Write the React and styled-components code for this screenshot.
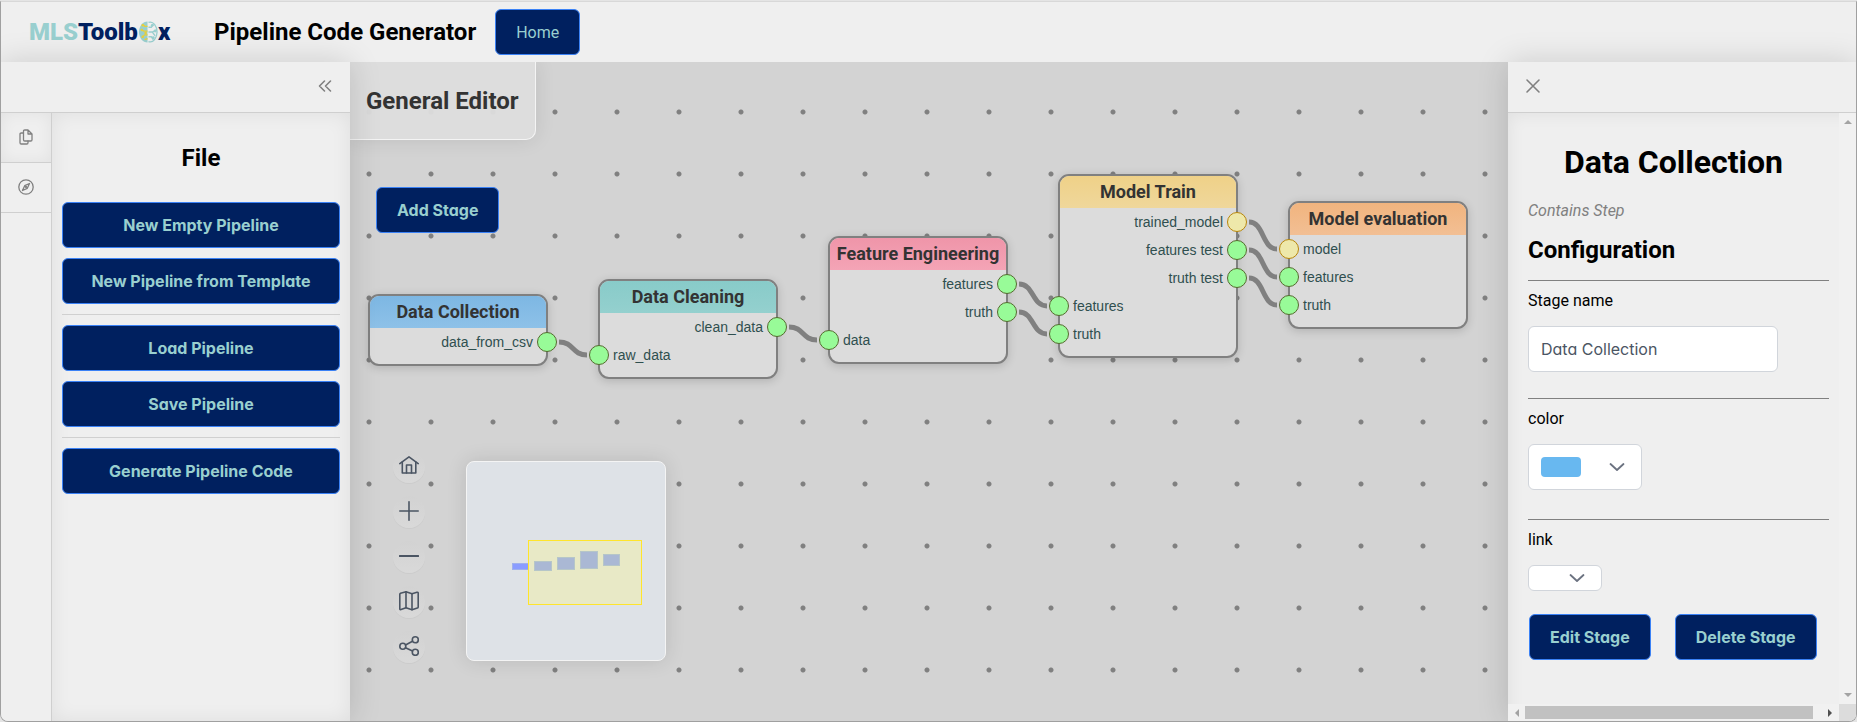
import React from "react";
import styled, { createGlobalStyle, css } from "styled-components";

const GlobalStyle = createGlobalStyle`
  *, *::before, *::after { box-sizing: border-box; }
  body { margin: 0; background: #e4e4e4; font-family: Roboto, "Liberation Sans", sans-serif; color: #000; }
  h1, h2, h3, p { margin: 0; }
  button, input, select { font: inherit; }
`;

const Screen = styled.div`
  display: flex;
  flex-direction: column;
  height: 100vh;
  min-height: 640px;
  padding-top: 1px;
`;

const Window = styled.div`
  flex: 1;
  min-height: 0;
  display: flex;
  flex-direction: column;
  overflow: hidden;
  background: #efefef;
  border: 1px solid #a0a0a0;
  border-top-color: #d8d8d8;
  border-radius: 0 0 8px 8px;
`;

const Header = styled.header`
  display: flex;
  align-items: center;
  flex: none;
  height: 60px;
  padding: 0 28px;
`;

const Logo = styled.div`
  display: flex;
  align-items: center;
  flex: none;
  width: 143px;
  margin-right: 42px;
  font: 900 24px/36px Roboto, "Liberation Sans", sans-serif;
  color: #00205f;

  svg {
    flex: none;
  }
`;

const LogoLead = styled.span`
  color: #99cfcf;
`;

const AppTitle = styled.h1`
  margin-right: 19px;
  font-size: 24px;
  line-height: 32px;
  white-space: nowrap;
`;

const Button = styled.button`
  height: 46px;
  padding: 0 20px;
  border: 1px solid #3b82f6;
  border-radius: 6px;
  background: #00205f;
  color: #99cfcf;
  font-family: Inter, Roboto, sans-serif;
  font-feature-settings: "cv02", "cv03", "cv04", "cv11";
  font-size: 16px;
  font-weight: ${(p) => (p.$light ? 400 : 700)};
  white-space: nowrap;
  cursor: pointer;
`;

const HomeButton = styled(Button)`
  font-family: Roboto, sans-serif;
`;

const Body = styled.div`
  flex: 1;
  min-height: 0;
  display: flex;
`;

const Panel = styled.aside`
  position: relative;
  z-index: 2;
  display: flex;
  flex-direction: column;
  flex: none;
  width: ${(p) => p.$width};
  background: #efefef;
  box-shadow: 0 0 30px rgba(0, 0, 0, 0.15);
`;

const PanelBar = styled.div`
  display: flex;
  align-items: center;
  flex: none;
  justify-content: ${(p) => (p.$end ? "flex-end" : "flex-start")};
  height: 51px;
  padding: 0 14px 3px;
  border-bottom: 1px solid #cfcfcf;
`;

const IconButton = styled.button`
  display: grid;
  place-items: center;
  width: 22px;
  height: 22px;
  padding: 0;
  border: 0;
  background: none;
  color: #808080;
  cursor: pointer;
`;

const PanelMain = styled.div`
  flex: 1;
  min-height: 0;
  display: flex;
`;

const TabStrip = styled.nav`
  display: flex;
  flex-direction: column;
  flex: none;
  width: 51px;
  border-right: 1px solid #cfcfcf;
`;

const Tab = styled.button`
  display: grid;
  place-items: center;
  height: 50px;
  padding: 0 0 2px;
  border: 0;
  border-bottom: 1px solid #cfcfcf;
  background: none;
  color: #808080;
  box-shadow: ${(p) => (p.$active ? "inset 0 0 16px rgba(0,0,0,.06)" : "none")};
`;

const FileContent = styled.section`
  flex: 1;
  display: flex;
  flex-direction: column;
  gap: 10px;
  padding: 29px 10px 10px;
  box-shadow: inset 0 0 20px rgba(0, 0, 0, 0.07);
`;

const FileTitle = styled.h2`
  margin-bottom: 18px;
  font-size: 24px;
  line-height: 32px;
  text-align: center;
`;

const Divider = styled.hr`
  width: 100%;
  height: 1px;
  margin: 0;
  border: 0;
  background: #d0d0d0;
`;

const Canvas = styled.main`
  position: relative;
  flex: 1;
  min-width: 0;
  overflow: hidden;
  background-color: #d3d3d3;
  background-image: radial-gradient(circle at center, #808080 2px, transparent 3px);
  background-size: 62px 62px;
  background-position: -12px 19px;
`;

const EditorTitle = styled.h2`
  position: absolute;
  top: 0;
  left: 0;
  padding: 23px 16px 22px;
  border: 1px solid #f4f4f4;
  border-width: 0 1px 1px 0;
  border-radius: 0 0 10px 0;
  background: rgba(221, 221, 221, 0.96);
  box-shadow: 0 0 20px rgba(0, 0, 0, 0.1);
  font-size: 24px;
  line-height: 32px;
  color: #333;
`;

const AddStage = styled(Button)`
  position: absolute;
  top: 125px;
  left: 26px;
`;

const Wires = styled.svg`
  position: absolute;
  top: 0;
  left: 0;
  width: 100%;
  height: 100%;
  fill: none;
  stroke: #808080;
  stroke-width: 5;
`;

const NodeBox = styled.article`
  position: absolute;
  width: 180px;
  padding-bottom: 8px;
  border: 2px solid #808080;
  border-radius: 11px;
  background: #dcdcdc;
  box-shadow: 0 2px 10px rgba(0, 0, 0, 0.16);
`;

const NodeTitle = styled.h3`
  height: 32px;
  border-radius: 9px 9px 0 0;
  background: linear-gradient(${(p) => p.$from}, ${(p) => p.$to});
  font-size: 18px;
  line-height: 32px;
  text-align: center;
  white-space: nowrap;
  color: #333;
`;

const Port = styled.div`
  display: flex;
  align-items: center;
  gap: 4px;
  height: 28px;
  margin: 0 -11px;
  flex-direction: ${(p) => (p.$out ? "row-reverse" : "row")};
  font: 14px/20px "Liberation Sans", Arial, sans-serif;
  color: #2f4f4f;
`;

const Socket = styled.span`
  width: 20px;
  height: 20px;
  border-radius: 50%;
  ${(p) =>
    p.$model
      ? css`background: #eee8aa; border: 1px solid #b8860b;`
      : css`background: #98fb98; border: 1px solid #556b2f;`}
`;

const Toolbar = styled.div`
  position: absolute;
  bottom: 58px;
  left: 43px;
  display: flex;
  flex-direction: column;
  gap: 13px;
`;

const ToolButton = styled.button`
  display: grid;
  place-items: center;
  width: 32px;
  height: 32px;
  padding: 0 0 2px;
  border: 0;
  border-radius: 50%;
  background: linear-gradient(#d2d2d2, #d9d9d9);
  box-shadow: 0 1px 1px rgba(0, 0, 0, 0.04);
  color: #4b5563;
`;

const Minimap = styled.div`
  position: absolute;
  bottom: 60px;
  left: 116px;
  width: 200px;
  height: 200px;
  border: 1px solid #f4f4f4;
  border-radius: 8px;
  background: #dee2e7;
  box-shadow: 0 0 20px rgba(0, 0, 0, 0.12);
`;

const PropertiesArea = styled.div`
  flex: 1;
  min-height: 0;
  display: grid;
  grid-template-columns: 1fr 17px;
  grid-template-rows: 1fr 17px;
`;

const Properties = styled.form`
  display: flex;
  flex-direction: column;
  align-items: flex-start;
  min-height: 0;
  padding: 27px 10px 0 20px;
  overflow: hidden;
  box-shadow: inset 12px 12px 16px -10px rgba(0, 0, 0, 0.06);
`;

const StageTitle = styled.h2`
  align-self: center;
  margin-bottom: 17px;
  padding-right: 10px;
  font-size: 32px;
  line-height: 44px;
`;

const StageNote = styled.p`
  margin-bottom: 13px;
  font-size: 16px;
  line-height: 20px;
  font-style: italic;
  color: #808080;
`;

const SectionTitle = styled.h3`
  margin-bottom: 14px;
  font-size: 24px;
  line-height: 32px;
`;

const Field = styled.div`
  width: 100%;
  padding: 10px 0 ${(p) => p.$space};
  border-top: 1px solid #808080;
`;

const Label = styled.label`
  display: block;
  margin-bottom: 15px;
  font-size: 16px;
  line-height: 20px;
`;

const control = css`
  border: 1px solid #d1d5db;
  border-radius: 6px;
  background: #fff;
  color: #4b5563;
`;

const TextInput = styled.input`
  ${control}
  display: block;
  width: 250px;
  height: 46px;
  padding: 0 12px;
  font-family: Inter, Roboto, sans-serif;
  font-feature-settings: "cv02", "cv03", "cv04", "cv11";
  font-size: 16px;
`;

const SelectWrap = styled.div`
  position: relative;
  width: ${(p) => p.$width};
  height: ${(p) => p.$height};
  color: #6b7280;

  svg {
    position: absolute;
    right: 17px;
    top: calc(50% - 8px);
    pointer-events: none;
  }
`;

const Select = styled.select`
  ${control}
  appearance: none;
  display: block;
  width: 100%;
  height: 100%;
`;

const Swatch = styled.span`
  position: absolute;
  left: 13px;
  top: 13px;
  width: 40px;
  height: 20px;
  border-radius: 4px;
  background: #68b8f0;
  pointer-events: none;
`;

const Actions = styled.div`
  display: flex;
  gap: 24px;
  padding-left: 1px;
`;

const ScrollTrack = styled.div`
  display: flex;
  flex-direction: ${(p) => (p.$vertical ? "column" : "row")};
  align-items: center;
  justify-content: space-between;
  padding: ${(p) => (p.$vertical ? "5px 0" : "0 5px")};
  background: #f1f1f1;
`;

const ScrollThumb = styled.div`
  flex: 1;
  height: 13px;
  margin: 0 13px 0 4px;
  background: #c1c1c1;
`;

const ScrollCorner = styled.div`
  background: #dcdcdc;
`;

const Icon = ({ size = 16, children, w = 1.6, box = "0 0 20 20" }) => (
  <svg width={size} height={size} viewBox={box} fill="none" stroke="currentColor"
    strokeWidth={w} strokeLinecap="round" strokeLinejoin="round" aria-hidden="true">
    {children}
  </svg>
);

const Chevron = () => (
  <Icon size={16} box="0 0 16 16" w={1.8}><path d="M1.500 5l6.500 6 6.500-6" /></Icon>
);

const Arrow = ({ d, fill }) => (
  <svg width="8" height="8" viewBox="0 0 8 8" aria-hidden="true"><path d={d} fill={fill} /></svg>
);

const Brain = () => (
  <svg width="20" height="24" viewBox="0 0 21 24" fill="none" aria-hidden="true">
    <path d="M10 1C5 1 1 6 1 12s4 11 9 11z" fill="#99cfcf" />
    <path d="M11 2c5-2 9 4 9 10s-4 12-9 10M11 7h3l2-3M11 12h4l4-2M11 17h3l2 3M15 12l3 4" stroke="#99cfcf" strokeWidth="1.4" />
    <path d="M10 6H7L5 4M10 11H6L3 9M10 15H7l-3 3M10 19l-3 1" stroke="#e8cf3a" strokeWidth="1.3" />
    <g fill="#e8cf3a"><circle cx="5" cy="5" r="1.3" /><circle cx="4" cy="10" r="1.3" /><circle cx="5" cy="17" r="1.3" /><circle cx="8" cy="13" r="1.3" /></g>
    <g fill="#99cfcf"><circle cx="15" cy="5" r="1.5" /><circle cx="18" cy="11" r="1.5" /><circle cx="16" cy="18" r="1.5" /></g>
  </svg>
);

const nodes = [
  { title: "Data Collection", x: 18, y: 232, from: "#7db7e3", to: "#8dc1e8", outs: ["data_from_csv"], ins: [] },
  { title: "Data Cleaning", x: 248, y: 217, from: "#88cbc9", to: "#94d0ce", outs: ["clean_data"], ins: ["raw_data"] },
  { title: "Feature Engineering", x: 478, y: 174, from: "#ef95a9", to: "#f4a4b6", outs: ["features", "truth"], ins: ["data"] },
  { title: "Model Train", x: 708, y: 112, from: "#efd188", to: "#efd79b", outs: ["trained_model", "features test", "truth test"], ins: ["features", "truth"] },
  { title: "Model evaluation", x: 938, y: 139, from: "#f1b47e", to: "#f2bf94", outs: [], ins: ["model", "features", "truth"] },
];

const wires = [
  [209, 280, 237, 293],
  [439, 265, 467, 278],
  [669, 222, 697, 244],
  [669, 250, 697, 272],
  [899, 160, 927, 187],
  [899, 188, 927, 215],
  [899, 216, 927, 243],
];

const miniNodes = [
  [68, 100, 18, 10],
  [91, 96, 18, 13],
  [114, 90, 18, 18],
  [137, 93, 17, 12],
];

const tools = [
  ["Reset view", <><path d="M.8 7.6L10 .9l9.200 6.700" /><path d="M3.300 6v11h13.500V6" /><path d="M7.500 17V9h5v8" /></>],
  ["Zoom in", <path d="M.8 10h18.400M10 .8v18.400" />],
  ["Zoom out", <path d="M.8 10h18.400" strokeWidth="2" />],
  ["Toggle map", <><path d="M.8 3.200Q.8 2.500 1.500 2.200L7 .8l6 2 5-1.500q1.200-.3 1.200.8V16q0 .8-.8 1l-5.400 1.700-6-2-5 1.900Q.8 19 .8 18z" /><path d="M7 .8v16M13 2.800v16" /></>],
  ["Arrange", <><circle cx="3.800" cy="10.300" r="3" /><circle cx="16.300" cy="3.800" r="3" /><circle cx="16.300" cy="16.300" r="3" /><path d="M6.500 9l7-3.700M6.500 11.700l7 3.300" /></>],
];

function StageNode({ node }) {
  return (
    <NodeBox style={{ left: node.x, top: node.y }}>
      <NodeTitle $from={node.from} $to={node.to}>{node.title}</NodeTitle>
      {node.outs.map((name) => (
        <Port key={name} $out><Socket $model={name.includes("model")} /><span>{name}</span></Port>
      ))}
      {node.ins.map((name) => (
        <Port key={name}><Socket $model={name.includes("model")} /><span>{name}</span></Port>
      ))}
    </NodeBox>
  );
}

export default function App() {
  return (
    <Screen>
      <GlobalStyle />
      <Window>
        <Header>
          <Logo><LogoLead>MLS</LogoLead>Toolb<Brain />x</Logo>
          <AppTitle>Pipeline Code Generator</AppTitle>
          <HomeButton $light>Home</HomeButton>
        </Header>
        <Body>
          <Panel $width="349px">
            <PanelBar $end>
              <IconButton aria-label="Collapse panel">
                <Icon size={16} box="0 0 16 16"><path d="M7.500 3L2.500 8l5 5M13.500 3l-5 5 5 5" /></Icon>
              </IconButton>
            </PanelBar>
            <PanelMain>
              <TabStrip>
                <Tab $active aria-label="File">
                  <Icon size={16} box="0 0 16 16" w={1.3}>
                    <path d="M5.500 2.200q0-1.200 1.200-1.200H10l4 4v5.800q0 1.200-1.200 1.200H6.700q-1.200 0-1.200-1.200zM10 1v4h4" />
                    <path d="M5.500 4H3.200Q2 4 2 5.200v8.600Q2 15 3.200 15h5.600q1.200 0 1.200-1.200V12" />
                  </Icon>
                </Tab>
                <Tab aria-label="Explore">
                  <Icon size={16} box="0 0 16 16" w={1.3}>
                    <circle cx="8" cy="8" r="7.200" />
                    <path d="M11.500 4.500L9.300 9.300l-4.800 2.200 2.200-4.800z" />
                    <circle cx="8" cy="8" r=".5" />
                  </Icon>
                </Tab>
              </TabStrip>
              <FileContent>
                <FileTitle>File</FileTitle>
                <Button>New Empty Pipeline</Button>
                <Button>New Pipeline from Template</Button>
                <Divider />
                <Button>Load Pipeline</Button>
                <Button>Save Pipeline</Button>
                <Divider />
                <Button>Generate Pipeline Code</Button>
              </FileContent>
            </PanelMain>
          </Panel>

          <Canvas>
            <EditorTitle>General Editor</EditorTitle>
            <AddStage>Add Stage</AddStage>
            <Wires aria-hidden="true">
              {wires.map(([x1, y1, x2, y2]) => (
                <path key={`${x1}-${y1}`} d={`M${x1} ${y1}C${x1 + 15} ${y1} ${x2 - 15} ${y2} ${x2} ${y2}`} />
              ))}
            </Wires>
            {nodes.map((node) => <StageNode key={node.title} node={node} />)}
            <Toolbar>
              {tools.map(([name, drawing]) => (
                <ToolButton key={name} aria-label={name}><Icon size={20}>{drawing}</Icon></ToolButton>
              ))}
            </Toolbar>
            <Minimap>
              <svg width="198" height="198" viewBox="0 0 198 198" role="img" aria-label="Minimap">
                <rect x="45.500" y="101.500" width="18" height="6" fill="#8a9cff" stroke="#9fb0ec" />
                <rect x="61.500" y="78.500" width="113" height="64" fill="#e8e9c6" stroke="#ffe52b" />
                {miniNodes.map(([x, y, w, h]) => (
                  <rect key={x} x={x - 0.5} y={y - 0.5} width={w - 1} height={h - 1} fill="#aab8d4" stroke="#b6c6c8" />
                ))}
              </svg>
            </Minimap>
          </Canvas>

          <Panel $width="348px">
            <PanelBar>
              <IconButton aria-label="Close panel">
                <Icon size={16} box="0 0 16 16"><path d="M2 2l12 12M14 2L2 14" /></Icon>
              </IconButton>
            </PanelBar>
            <PropertiesArea>
              <Properties onSubmit={(e) => e.preventDefault()}>
                <StageTitle>Data Collection</StageTitle>
                <StageNote>Contains Step</StageNote>
                <SectionTitle>Configuration</SectionTitle>
                <Field $space="26px">
                  <Label htmlFor="stage-name">Stage name</Label>
                  <TextInput id="stage-name" defaultValue="Data Collection" />
                </Field>
                <Field $space="29px">
                  <Label htmlFor="stage-color">color</Label>
                  <SelectWrap $width="114px" $height="46px">
                    <Select id="stage-color"><option value="#68b8f0" aria-label="Light blue" /></Select>
                    <Swatch />
                    <Chevron />
                  </SelectWrap>
                </Field>
                <Field $space="23px">
                  <Label htmlFor="stage-link">link</Label>
                  <SelectWrap $width="74px" $height="26px">
                    <Select id="stage-link"><option value="" aria-label="No link" /></Select>
                    <Chevron />
                  </SelectWrap>
                </Field>
                <Actions>
                  <Button type="button">Edit Stage</Button>
                  <Button type="button">Delete Stage</Button>
                </Actions>
              </Properties>
              <ScrollTrack $vertical aria-hidden="true">
                <Arrow d="M0 6l4-4 4 4z" fill="#a3a3a3" />
                <Arrow d="M0 2l4 4 4-4z" fill="#a3a3a3" />
              </ScrollTrack>
              <ScrollTrack aria-hidden="true">
                <Arrow d="M6 0L2 4l4 4z" fill="#a3a3a3" />
                <ScrollThumb />
                <Arrow d="M2 0l4 4-4 4z" fill="#505050" />
              </ScrollTrack>
              <ScrollCorner />
            </PropertiesArea>
          </Panel>
        </Body>
      </Window>
    </Screen>
  );
}
